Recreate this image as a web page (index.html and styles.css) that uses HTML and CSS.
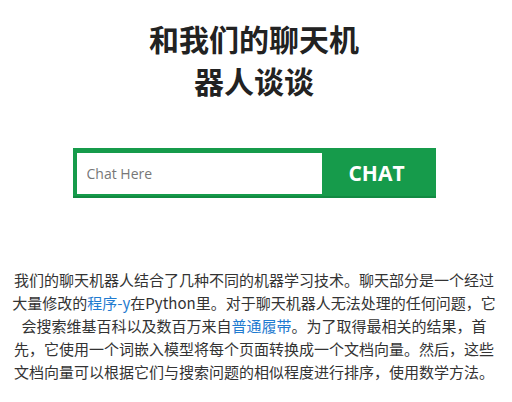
FILE: index.html
```html
<!DOCTYPE html>
<html lang="zh">
<head>
  <meta charset="UTF-8">
  <title>聊天机器人</title>
  <link rel="stylesheet" href="styles.css">
</head>
<body>
  <div class="page">
    <h1 class="title">和我们的聊天机器人谈谈</h1>
    <form class="chat-form" onsubmit="return false;">
      <input type="text" class="chat-input" placeholder="Chat Here">
      <button type="submit" class="chat-button">CHAT</button>
    </form>
    <p class="about">我们的聊天机器人结合了几种不同的机器学习技术。聊天部分是一个经过大量修改的<a href="#">程序-y</a>在Python里。对于聊天机器人无法处理的任何问题，它 会搜索维基百科以及数百万来自<a href="#">普通履带</a>。为了取得最相关的结果，首先，它使用一个词嵌入模型将每个页面转换成一个文档向量。然后，这些文档向量可以根据它们与搜索问题的相似程度进行排序，使用数学方法。</p>
  </div>
</body>
</html>
```

FILE: styles.css
```css
body {
  margin: 0;
  padding: 0;
  background: #fff;
  font-family: "Open Sans", "Noto Sans CJK SC", sans-serif;
  color: #333;
}
.page {
  padding: 17px 12px 0 8px;
  text-align: center;
}
.title {
  width: 230px;
  margin: 0 auto;
  font-family: "Noto Sans CJK SC", sans-serif;
  font-size: 30px;
  line-height: 42px;
  font-weight: bold;
  color: #222;
}
.chat-form {
  display: flex;
  width: 359px;
  height: 41px;
  margin: 47px auto 0;
  padding: 5px 0 2px 4px;
  background: #169b4b;
  border-bottom: 2px solid #128a42;
}
.chat-input {
  width: 245px;
  height: 41px;
  box-sizing: border-box;
  border: none;
  padding: 0 10px;
  font-family: "Open Sans", sans-serif;
  font-size: 14px;
  color: #333;
  outline: none;
}
.chat-input::placeholder {
  color: #777;
}
.chat-button {
  flex: 1;
  border: none;
  background: transparent;
  color: #fff;
  font-family: "Open Sans", sans-serif;
  font-size: 21px;
  font-weight: bold;
  padding: 0 4px 2px 0;
  cursor: pointer;
}
.about {
  margin: 70px 0 0;
  font-family: "Noto Sans CJK SC", sans-serif;
  font-size: 15px;
  line-height: 23px;
}
.about a {
  color: #1f7bd0;
  text-decoration: none;
}
```
